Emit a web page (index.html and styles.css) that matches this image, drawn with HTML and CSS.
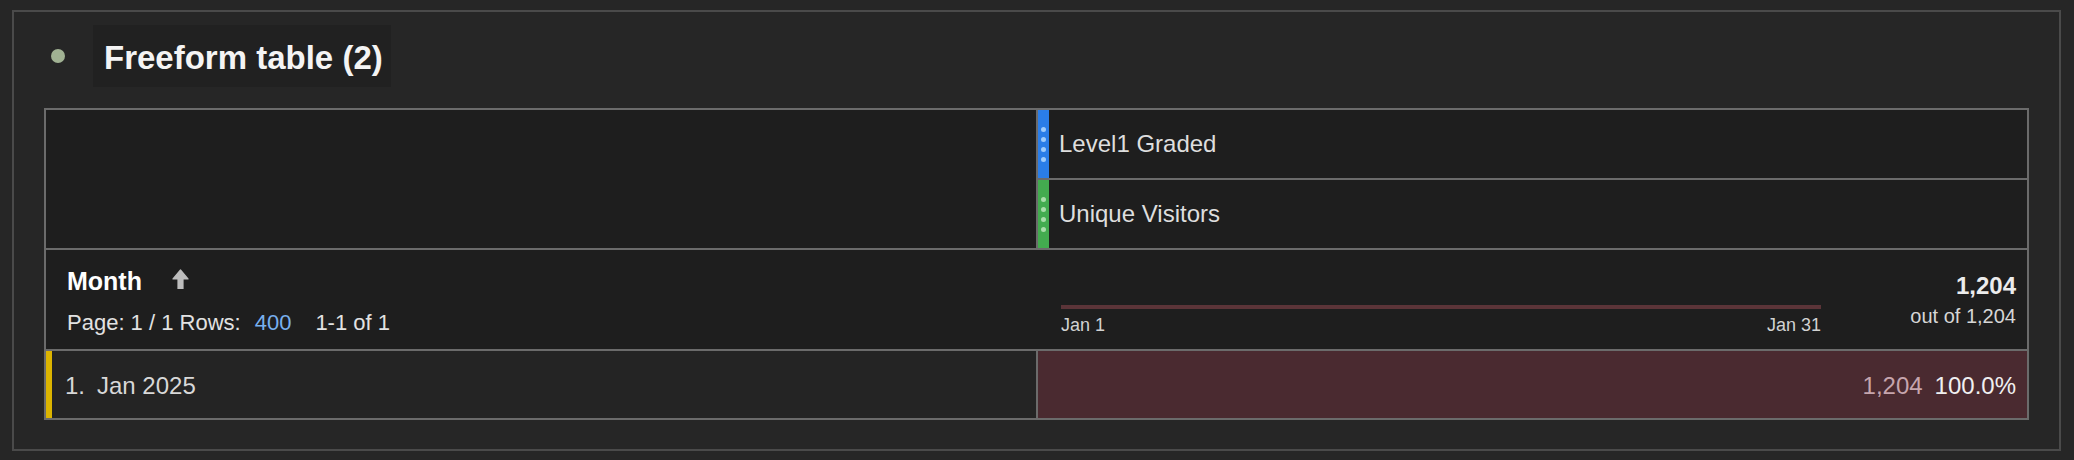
FILE: index.html
```html
<!DOCTYPE html>
<html lang="en">
<head>
<meta charset="utf-8">
<title>Freeform table (2)</title>
<link rel="stylesheet" href="styles.css">
</head>
<body>
<div class="panel">
  <div class="panel-head">
    <span class="status-dot"></span>
    <h2 class="panel-title">Freeform table (2)</h2>
  </div>
  <div class="ftable">
    <div class="hdr">
      <div class="hdr-blank"></div>
      <div class="metrics">
        <div class="metric">
          <span class="handle handle-blue"><i></i><i></i><i></i><i></i></span>
          <span class="metric-name">Level1 Graded</span>
        </div>
        <div class="metric metric-second">
          <span class="handle handle-green"><i></i><i></i><i></i><i></i></span>
          <span class="metric-name">Unique Visitors</span>
        </div>
      </div>
    </div>
    <div class="colhdr">
      <div class="dim">
        <div class="dim-title">
          <span>Month</span>
          <svg class="sort-arrow" width="17" height="20" viewBox="0 0 17 20"><path d="M8.5 1 L16 10 L11 10 L11 20 L6 20 L6 10 L1 10 Z" fill="#bdbdbd" stroke="#bdbdbd" stroke-width="1.2" stroke-linejoin="round"/></svg>
        </div>
        <div class="pager">Page: 1 / 1 Rows:<span class="rows">400</span><span class="range">1-1 of 1</span></div>
      </div>
      <div class="summary">
        <div class="spark">
          <div class="spark-line"></div>
          <div class="spark-labels"><span>Jan 1</span><span>Jan 31</span></div>
        </div>
        <div class="totals">
          <div class="total">1,204</div>
          <div class="outof">out of 1,204</div>
        </div>
      </div>
    </div>
    <div class="row">
      <div class="row-dim">
        <span class="sel-bar"></span>
        <span class="idx">1.</span>
        <span class="row-label">Jan 2025</span>
      </div>
      <div class="row-val">
        <span class="num">1,204</span>
        <span class="pct">100.0%</span>
      </div>
    </div>
  </div>
</div>
</body>
</html>
```
FILE: styles.css
```css
html, body {
  margin: 0;
  padding: 0;
  background: #262626;
}
body {
  font-family: "Liberation Sans", Arial, sans-serif;
  color: #e0e0e0;
  height: 460px;
  overflow: hidden;
}
.panel {
  box-sizing: border-box;
  width: 2049px;
  height: 441px;
  margin: 10px 0 0 12px;
  border: 2px solid #4a4a4a;
  padding: 13px 30px 29px 30px;
  background: #262626;
}
.panel-head {
  display: flex;
  align-items: center;
  height: 62px;
  margin-bottom: 21px;
}
.status-dot {
  width: 14px;
  height: 14px;
  border-radius: 50%;
  background: #a1b293;
  margin-left: 7px;
}
.panel-title {
  margin: 0 0 0 28px;
  box-sizing: border-box;
  height: 62px;
  padding: 5px 8px 1px 11px;
  line-height: 56px;
  font-size: 33px;
  font-weight: 700;
  color: #f4f4f4;
  background: #212121;
}
.ftable {
  border: 2px solid #6b6b6b;
  background: #1e1e1e;
}
.hdr {
  display: flex;
  border-bottom: 2px solid #6b6b6b;
}
.hdr-blank {
  width: 990px;
  flex: none;
}
.metrics {
  flex: 1;
  border-left: 2px solid #6b6b6b;
}
.metric {
  display: flex;
  align-items: center;
  height: 68px;
}
.metric-second {
  border-top: 2px solid #6b6b6b;
}
.handle {
  align-self: stretch;
  width: 11px;
  display: flex;
  flex-direction: column;
  align-items: center;
  justify-content: center;
  gap: 5px;
}
.handle i {
  display: block;
  width: 5px;
  height: 5px;
  border-radius: 50%;
}
.handle-blue { background: #2a7de8; }
.handle-blue i { background: #9ecbfb; }
.handle-green { background: #43ab4f; }
.handle-green i { background: #a9dda9; }
.metric-name {
  margin-left: 10px;
  font-size: 24px;
  color: #dedede;
}
.colhdr {
  display: flex;
  height: 99px;
  border-bottom: 2px solid #6b6b6b;
}
.dim {
  width: 992px;
  flex: none;
  box-sizing: border-box;
  padding: 16px 0 0 21px;
}
.dim-title {
  display: flex;
  align-items: center;
  height: 30px;
  font-size: 25px;
  font-weight: 700;
  color: #ffffff;
}
.sort-arrow {
  margin-left: 30px;
  margin-top: -4px;
}
.pager {
  margin-top: 12px;
  font-size: 22px;
  line-height: 30px;
  color: #e2e2e2;
}
.rows {
  margin-left: 14px;
  color: #78b0ee;
}
.range {
  margin-left: 24px;
}
.summary {
  flex: 1;
  display: flex;
  align-items: flex-start;
  padding: 0 11px 0 23px;
}
.spark {
  width: 760px;
  flex: none;
  padding-top: 55px;
}
.spark-line {
  height: 4px;
  background: #5b3438;
}
.spark-labels {
  display: flex;
  justify-content: space-between;
  margin-top: 5px;
  font-size: 18px;
  line-height: 22px;
  color: #d2d2d2;
}
.totals {
  flex: 1;
  text-align: right;
  padding-top: 22px;
}
.total {
  font-size: 24px;
  line-height: 28px;
  font-weight: 700;
  color: #ececec;
}
.outof {
  margin-top: 3px;
  font-size: 20px;
  line-height: 26px;
  color: #d6d6d6;
}
.row {
  display: flex;
  height: 67px;
}
.row-dim {
  width: 990px;
  flex: none;
  display: flex;
  align-items: center;
  background: #242424;
  font-size: 24px;
  color: #d8d8d8;
}
.sel-bar {
  align-self: stretch;
  width: 6px;
  background: #dcb400;
  margin-right: 13px;
}
.idx {
  width: 32px;
  padding-top: 3px;
}
.row-label {
  padding-top: 3px;
}
.row-val {
  flex: 1;
  display: flex;
  align-items: center;
  justify-content: flex-end;
  border-left: 2px solid #6b6b6b;
  background: #4a2a30;
  padding: 3px 11px 0 0;
  font-size: 24px;
}
.num {
  color: #c6a5ad;
}
.pct {
  margin-left: 12px;
  color: #f0f0f0;
}
```
